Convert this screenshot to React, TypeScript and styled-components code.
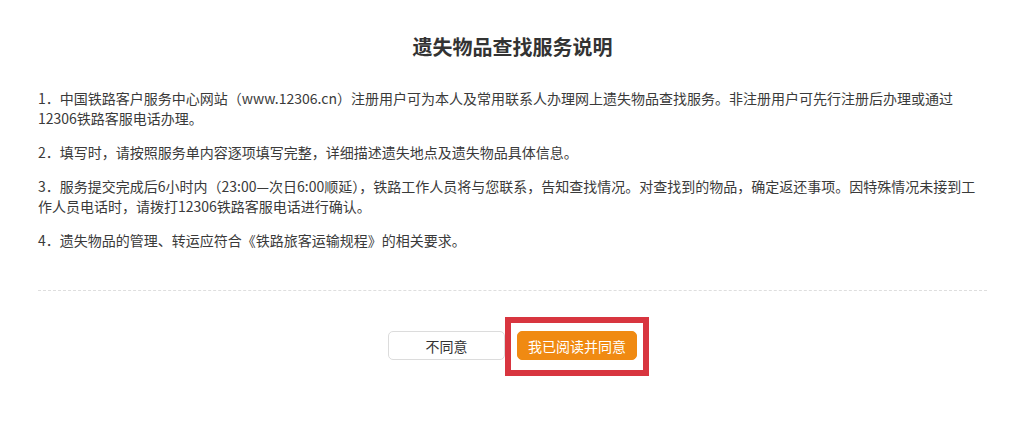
import React from "react";
import styled, { createGlobalStyle } from "styled-components";

const GlobalStyle = createGlobalStyle`
  html, body {
    margin: 0;
    padding: 0;
    background: #fff;
  }
  body {
    font-family: "Microsoft YaHei", "Noto Sans CJK SC", "Noto Sans", sans-serif;
    color: #333;
  }
`;

const items = [
  "1．中国铁路客户服务中心网站（www.12306.cn）注册用户可为本人及常用联系人办理网上遗失物品查找服务。非注册用户可先行注册后办理或通过12306铁路客服电话办理。",
  "2．填写时，请按照服务单内容逐项填写完整，详细描述遗失地点及遗失物品具体信息。",
  "3．服务提交完成后6小时内（23:00—次日6:00顺延），铁路工作人员将与您联系，告知查找情况。对查找到的物品，确定返还事项。因特殊情况未接到工作人员电话时，请拨打12306铁路客服电话进行确认。",
  "4．遗失物品的管理、转运应符合《铁路旅客运输规程》的相关要求。",
];

const App = () => {
  return (
    <>
      <GlobalStyle />
      <Page>
        <Title>遗失物品查找服务说明</Title>
        <Notes>
          {items.map((text) => (
            <Note key={text}>{text}</Note>
          ))}
        </Notes>
        <Divider />
        <Actions>
          <Button>不同意</Button>
          <Button primary highlighted>
            我已阅读并同意
          </Button>
        </Actions>
      </Page>
    </>
  );
};

const Page = styled.div`
  width: 1028px;
  height: 434px;
  box-sizing: border-box;
  padding: 33px 41px 0 38px;
  overflow: hidden;
`;

const Title = styled.h2`
  margin: 0;
  font-size: 20px;
  line-height: 28px;
  font-weight: bold;
  text-align: center;
  color: #333;
`;

const Notes = styled.div`
  margin-top: 27px;
  width: 946px;
`;

const Note = styled.p`
  margin: 0 0 14px;
  font-size: 14px;
  line-height: 20px;
  color: #3a3a3a;
  &:last-child {
    margin-bottom: 0;
  }
`;

const Divider = styled.div`
  margin-top: 40px;
  width: 949px;
  border-top: 1px dashed #dedede;
`;

const Actions = styled.div`
  margin-top: 40px;
  display: flex;
  justify-content: center;
  gap: 12px;
`;

const Button = styled.button<{ primary?: boolean; highlighted?: boolean }>`
  position: relative;
  width: ${(p) => (p.primary ? 120 : 117)}px;
  height: 29px;
  padding: 0;
  border-radius: 5px;
  font-family: inherit;
  font-size: 14px;
  cursor: pointer;
  border: 1px solid ${(p) => (p.primary ? "#f08a12" : "#dcdcdc")};
  background: ${(p) => (p.primary ? "#f08a12" : "#fff")};
  color: ${(p) => (p.primary ? "#fff" : "#333")};

  ${(p) =>
    p.highlighted &&
    `
    &::after {
      content: "";
      position: absolute;
      top: -15px;
      left: -13px;
      right: -13px;
      bottom: -17px;
      border: 6px solid #d8353f;
      pointer-events: none;
    }
  `}
`;

export default App;
